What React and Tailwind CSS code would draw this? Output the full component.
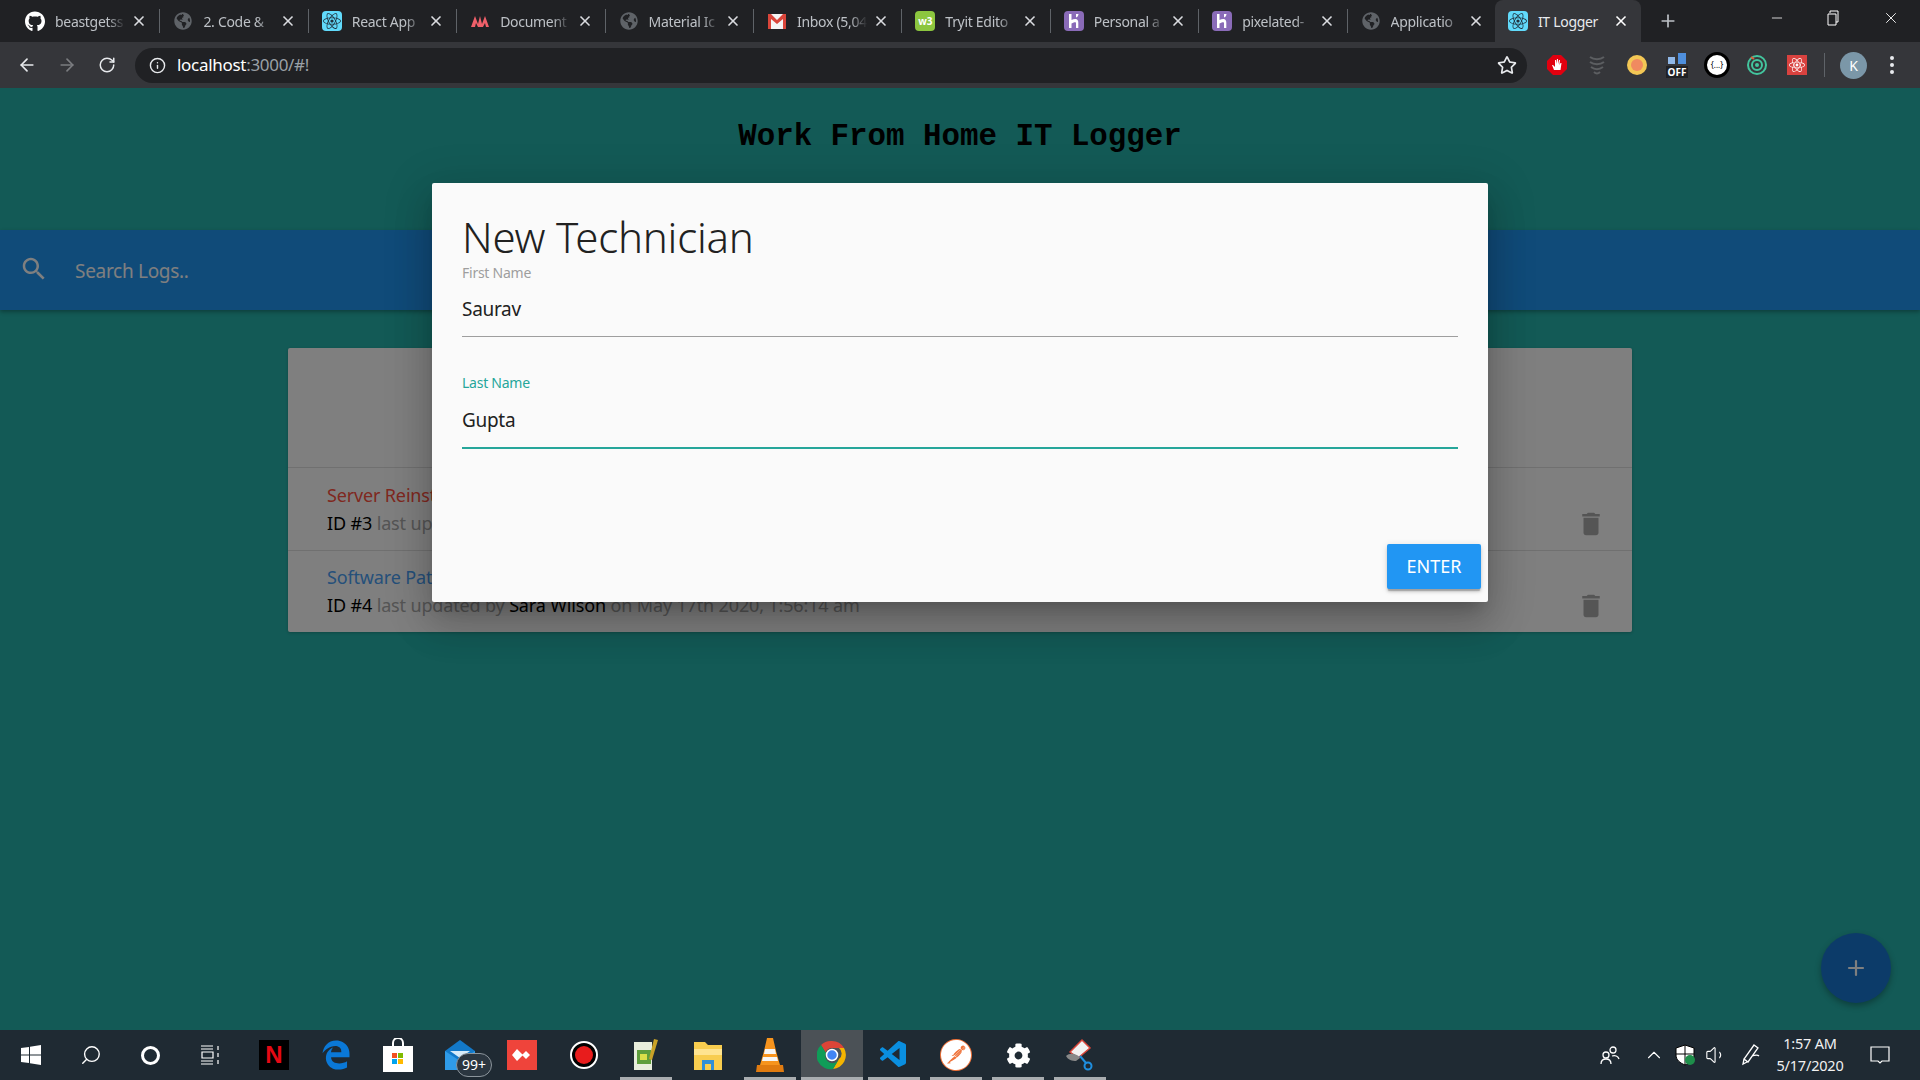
import React from "react";
import { FaGithub, FaGlobeAmericas, FaReact, FaCog, FaRegStar, FaEdgeLegacy } from "react-icons/fa";
import { SiPostman } from "react-icons/si";
import { VscVscode } from "react-icons/vsc";
import { ArrowLeft, ArrowRight, RotateCw, Info, Plus, X, Minus, ChevronUp, Search, Volume1 } from "lucide-react";

const ReactFav = () => (
  <span className="w-5 h-5 bg-[#61dafb] flex items-center justify-center rounded-sm">
    <FaReact className="text-[#20323f] text-[18px]" />
  </span>
);
const Globe = () => <FaGlobeAmericas className="text-[#5f6368] text-[18px]" />;
const HerokuFav = () => (
  <span className="w-5 h-5 bg-[#8a6bb8] flex items-center justify-center rounded-sm">
    <svg width="20" height="20" viewBox="0 0 20 20" fill="white">
      <path d="M5 3h2.500v6c2-1 5-1.500 6 0 .8 1 .8 2 .8 3v5H12v-5c0-1-1-1.500-4.500.5v4.500H5z" />
      <path d="M12 3h2.500c0 1.500-1 3-2.500 3.500z" />
    </svg>
  </span>
);
const MaterialFav = () => (
  <svg width="20" height="20" viewBox="0 0 20 20">
    <path d="M1 16L5 5l3 8 2-8 2 8 3-8 4 11h-3l-1-4-2 4H8l-2-4-1 4z" fill="#f0606a" />
  </svg>
);
const GmailFav = () => (
  <svg width="20" height="20" viewBox="0 0 20 20">
    <rect x="1" y="3" width="18" height="15" fill="#f4f4f4" />
    <path d="M1 3h3l6 6 6-6h3v15h-3V8l-6 5-6-5v10H1z" fill="#d9453a" />
  </svg>
);
const W3Fav = () => (
  <span className="w-5 h-5 bg-[#8cc63f] flex items-center justify-center rounded-sm text-[10px] font-bold text-white leading-none">w3</span>
);

// titles are what fits in the tab before chrome fades them out
const tabs = [
  { title: "beastgetss", icon: <FaGithub className="text-white text-[21px]" /> },
  { title: "2. Code &", icon: <Globe /> },
  { title: "React App", icon: <ReactFav /> },
  { title: "Document", icon: <MaterialFav /> },
  { title: "Material Ic", icon: <Globe /> },
  { title: "Inbox (5,04", icon: <GmailFav /> },
  { title: "Tryit Edito", icon: <W3Fav /> },
  { title: "Personal a", icon: <HerokuFav /> },
  { title: "pixelated-", icon: <HerokuFav /> },
  { title: "Applicatio", icon: <Globe /> },
];

const uiFont = "font-['Noto_Sans',sans-serif]";

const Tab = ({ title, icon, last }) => (
  <div className={`w-[148.4px] h-[42px] flex items-center relative pl-[13px] pr-[12px] ${last ? "" : "border-r border-[#5f6368] [border-image:linear-gradient(transparent_22%,#5f6368_22%,#5f6368_78%,transparent_78%)_1]"}`}>
    <span className="w-5 h-5 flex items-center justify-center shrink-0">{icon}</span>
    <span className="ml-[10px] w-[74px] whitespace-nowrap text-[14px] text-[#bdc1c6] tracking-[-0.3px] [mask-image:linear-gradient(to_right,black_72%,transparent_95%)]">{title}</span>
    <X className="ml-auto w-4 h-4 text-[#dadce0]" strokeWidth={2.5} />
  </div>
);

const ChromeBar = () => (
  <header className={`h-[88px] shrink-0 bg-[#202124] ${uiFont}`}>
    <div className="h-[42px] flex pl-[12px]">
      {tabs.map((t, i) => (
        <Tab key={t.title} title={t.title} icon={t.icon} last={i === tabs.length - 1} />
      ))}
      <div className="w-[146px] h-[42px] -ml-px bg-[#35363a] rounded-t-lg flex items-center pl-[13px] pr-[12px]">
        <ReactFav />
        <span className="ml-[10px] text-[14px] tracking-[-0.3px] text-[#e8eaed] whitespace-nowrap">IT Logger</span>
        <X className="ml-auto w-4 h-4 text-white" strokeWidth={2.5} />
      </div>
      <Plus className="ml-[17px] mt-[11px] w-[20px] h-[20px] text-[#bdc1c6]" />
      <div className="ml-auto flex items-start text-white">
        <Minus className="w-4 h-4 mt-[10px] mr-[40px]" strokeWidth={1.2} />
        <svg className="mt-[10px] mr-[41px]" width="16" height="16" viewBox="0 0 16 16" fill="none" stroke="white">
          <path d="M5 3V1h8v11h-2M3 4h8v11H3z" />
        </svg>
        <X className="w-[18px] h-[18px] mt-[9px] mr-[20px]" strokeWidth={1.2} />
      </div>
    </div>
    <div className="h-[46px] bg-[#35363a] flex items-center">
      <ArrowLeft className="ml-[17px] w-[20px] h-[20px] text-[#e8eaed]" />
      <ArrowRight className="ml-[20px] w-[20px] h-[20px] text-[#7b7d80]" />
      <RotateCw className="ml-[21px] w-[18px] h-[18px] text-[#e8eaed]" />
      <div className="ml-[19px] w-[1392px] h-[35px] rounded-full bg-[#202124] flex items-center pl-[14px] pr-[10px]">
        <Info className="w-[17px] h-[17px] text-[#e8eaed]" />
        <span className="ml-[11px] text-[17px] tracking-[-0.3px] text-white">
          localhost<span className="text-[#9aa0a6]">:3000/#!</span>
        </span>
        <FaRegStar className="ml-auto text-[20px] text-[#e8eaed]" />
      </div>
      <div className="flex items-center ml-[10px]">
        <span className="w-[40px] flex justify-center">
          <svg width="22" height="22" viewBox="0 0 22 22">
            <path d="M7 1h8l6 6v8l-6 6H7l-6-6V7z" fill="#e2000f" />
            <path d="M8 16l-2-5h1l2 2V6h1v4l1-5h1v5l1-4h1l-.5 5 1-2h1l-1 7z" fill="white" />
          </svg>
        </span>
        <span className="w-[40px] flex justify-center">
          <svg width="20" height="22" viewBox="0 0 20 22" fill="none" stroke="#5c5e61" strokeWidth="2">
            <path d="M3 3c4 3 10 3 14 0M3 8c4 3 10 3 14 0M4 13c4 3 8 3 12 0M7 18c2 2 4 2 6 0" />
          </svg>
        </span>
        <span className="w-[40px] flex justify-center">
          <span className="w-[20px] h-[20px] rounded-full bg-[#f3c755] flex items-center justify-center">
            <span className="w-[12px] h-[12px] rounded-full bg-[#f08a60]" />
          </span>
        </span>
        <span className="w-[40px] flex flex-col items-center relative">
          <svg width="20" height="14" viewBox="0 0 20 14">
            <rect x="1" y="5" width="7" height="7" fill="#90b8e8" />
            <rect x="11" y="1" width="8" height="11" fill="#4f8fdc" />
          </svg>
          <span className="bg-[#202124] text-white text-[10px] leading-[12px] font-bold px-[2px]">OFF</span>
        </span>
        <span className="w-[40px] flex justify-center">
          <span className="w-[20px] h-[20px] rounded-full bg-white border-[3px] border-black box-content -m-[2px] text-black text-[8px] leading-[20px] text-center">{"{...}"}</span>
        </span>
        <span className="w-[40px] flex justify-center">
          <svg width="22" height="22" viewBox="0 0 22 22" fill="none">
            <circle cx="11" cy="11" r="9" stroke="#43c59e" strokeWidth="2" />
            <circle cx="11" cy="11" r="5" stroke="#43c59e" strokeWidth="2" />
            <circle cx="11" cy="11" r="2" fill="#43c59e" />
            <path d="M5 3l3 2" stroke="#e0603a" strokeWidth="2" />
          </svg>
        </span>
        <span className="w-[40px] flex justify-center">
          <span className="w-[20px] h-[20px] bg-[#d9423f] flex items-center justify-center">
            <FaReact className="text-white text-[16px]" />
          </span>
        </span>
        <span className="w-px h-[24px] bg-[#5f6368] ml-[7px]" />
        <span className="ml-[15px] w-[27px] h-[27px] rounded-full bg-[#7b97a8] text-white text-[14px] flex items-center justify-center">K</span>
        <span className="ml-[23px] flex flex-col gap-[3px]">
          <span className="w-[4px] h-[4px] rounded-full bg-[#e8eaed]" />
          <span className="w-[4px] h-[4px] rounded-full bg-[#e8eaed]" />
          <span className="w-[4px] h-[4px] rounded-full bg-[#e8eaed]" />
        </span>
      </div>
    </div>
  </header>
);

const TrashIcon = () => (
  <svg className="w-[30px] h-[30px] text-[#aaaaaa] fill-current" viewBox="0 0 24 24">
    <path d="M6 19c0 1.1.9 2 2 2h8c1.1 0 2-.9 2-2V7H6v12zM19 4h-3.5l-1-1h-5l-1 1H5v2h14V4z" />
  </svg>
);

const logs = [
  { id: 3, title: "Server Reinstall", color: "text-[#ff5040]" },
  { id: 4, title: "Software Patch", color: "text-[#4aa0f5]" },
];

const LogRow = ({ log }) => (
  <li className="h-[82.5px] border-t border-[#e0e0e0] pl-[39px] pr-[26px] flex items-end relative">
    <div className="flex-1 pb-[13px]">
      <div className={`text-[18px] leading-[28px] tracking-[-0.15px] ${log.color}`}>{log.title}</div>
      <div className="text-[18px] leading-[28px] tracking-[-0.15px] text-[#aaaaaa] whitespace-nowrap">
        <span className="text-black">ID #{log.id}</span> last updated by <span className="text-black">Sara Wilson</span> on May 17th 2020, 1:56:14 am
      </div>
    </div>
    <span className="pb-[11px]"><TrashIcon /></span>
  </li>
);

const Field = ({ label, value, focused }) => (
  <div className="h-[110px]">
    <div className={`text-[14px] leading-[20px] tracking-[-0.25px] ${focused ? "text-[#26a69a]" : "text-[#9e9e9e]"}`}>{label}</div>
    <div className={`mt-[6px] flex items-center pb-[6px] text-[19px] tracking-[-0.3px] text-[#212121] ${focused ? "border-b-2 border-[#26a69a] h-[50px]" : "h-[48px] border-b border-[#9e9e9e]"}`}>{value}</div>
  </div>
);

const Modal = () => (
  <div className="w-[1056px] h-[419px] bg-[#fafafa] rounded-[2px] px-[30px] pt-[28px] relative shadow-[0_24px_38px_3px_rgba(0,0,0,0.14),0_9px_46px_8px_rgba(0,0,0,0.12),0_11px_15px_-7px_rgba(0,0,0,0.2)]">
    <h4 className="text-[42px] leading-[52px] tracking-[-0.2px] font-light text-[#212121]">New Technician</h4>
    <Field label="First Name" value="Saurav" />
    <Field label="Last Name" value="Gupta" focused />
    <button className="absolute right-[7px] bottom-[13px] w-[94px] h-[45px] bg-[#2196f3] rounded-[2px] text-white text-[18px] shadow-[0_3px_3px_0_rgba(0,0,0,0.14),0_1px_7px_0_rgba(0,0,0,0.12),0_3px_1px_-1px_rgba(0,0,0,0.2)]">ENTER</button>
  </div>
);

const PageContent = () => (
  <main className={`flex-1 relative bg-[#26b4ac] overflow-hidden ${uiFont}`}>
    <h1 className="pt-[29px] h-[142px] text-center font-['Liberation_Mono',monospace] font-bold text-[30.8px] leading-[40px] text-black">
      Work From Home IT Logger
    </h1>
    <div className="h-[80px] bg-[#2196f3] flex items-center pl-[19px] shadow-[0_2px_4px_rgba(0,0,0,0.3)]">
      <svg className="w-[30px] h-[30px] text-white fill-current -mt-[3px]" viewBox="0 0 24 24">
        <path d="M15.5 14h-.79l-.28-.27C15.41 12.590 16 11.110 16 9.500 16 5.910 13.090 3 9.500 3S3 5.910 3 9.500 5.910 16 9.500 16c1.610 0 3.090-.59 4.230-1.570l.27.28v.79l5 4.990L20.490 19l-4.990-5zm-6 0C7.010 14 5 11.990 5 9.500S7.010 5 9.500 5 14 7.010 14 9.500 11.990 14 9.500 14z" />
      </svg>
      <span className="ml-[26px] mt-[3px] text-[19px] tracking-[-0.3px] text-white">Search Logs..</span>
    </div>
    <section className="mx-auto mt-[38px] w-[1344px] bg-white rounded-[2px] shadow-[0_1px_3px_rgba(0,0,0,0.2)]">
      <div className="h-[119px]" />
      <ul>
        {logs.map((log) => (
          <LogRow key={log.id} log={log} />
        ))}
      </ul>
    </section>
    <button className="absolute right-[29px] bottom-[27px] w-[70px] h-[70px] rounded-full bg-[#1976d2] flex items-center justify-center shadow-[0_3px_6px_rgba(0,0,0,0.3)]">
      <Plus className="w-[24px] h-[24px] text-white" strokeWidth={2.2} />
    </button>
    {/* dimmed overlay with the add technician modal */}
    <div className="absolute inset-0 bg-black/50 flex justify-center pt-[95px]">
      <Modal />
    </div>
  </main>
);

const taskIcons = [
  { key: "netflix", node: <span className="w-[30px] h-[30px] bg-black flex items-center justify-center text-[#e50914] font-bold text-[24px] leading-none font-['Liberation_Sans',sans-serif]">N</span> },
  { key: "edge", node: <FaEdgeLegacy className="text-[#0a78d7] text-[30px]" /> },
  { key: "store", node: (
    <svg width="30" height="34" viewBox="0 0 30 34">
      <path d="M10 8V5a5 5 0 0110 0v3" fill="none" stroke="white" strokeWidth="2" />
      <rect y="8" width="30" height="26" fill="white" />
      <rect x="9" y="15" width="5" height="5" fill="#f25022" /><rect x="15" y="15" width="5" height="5" fill="#7fba00" />
      <rect x="9" y="21" width="5" height="5" fill="#00a4ef" /><rect x="15" y="21" width="5" height="5" fill="#ffb900" />
    </svg>
  ) },
  { key: "mail", node: (
    <span className="relative">
      <svg width="30" height="30" viewBox="0 0 30 30">
        <rect y="11" width="30" height="19" fill="#2f9be8" />
        <path d="M0 11L15 0l15 11-15 10z" fill="#1379c9" />
        <path d="M5 11h20l-10 7z" fill="#d7ecfa" />
      </svg>
      <span className="absolute left-[11px] top-[13px] w-[36px] h-[24px] rounded-full bg-[#2b3640] border border-[#8c959c] text-white text-[14px] leading-[22px] text-center">99+</span>
    </span>
  ) },
  { key: "anydesk", node: (
    <span className="w-[30px] h-[30px] bg-[#ef443b] flex items-center justify-center">
      <svg width="20" height="14" viewBox="0 0 20 14" fill="white"><path d="M5 1l6 6-6 6-5-6zM14 3l4 4-4 4-4-4z" /></svg>
    </span>
  ) },
  { key: "record", node: (
    <span className="w-[28px] h-[28px] rounded-full bg-black border-2 border-white flex items-center justify-center">
      <span className="w-[18px] h-[18px] rounded-full bg-[#e81c1c]" />
    </span>
  ) },
  { key: "sublime", on: true, node: (
    <svg width="28" height="34" viewBox="0 0 28 34">
      <path d="M2 4h18v28H2z" fill="#e8eedc" /><path d="M5 12h14v14H5z" fill="#5e9e3c" /><path d="M8 16h7v6H8z" fill="#d9e04a" /><path d="M22 1l4 1-6 20-3-1z" fill="#c9a227" />
    </svg>
  ) },
  { key: "folder", node: (
    <svg width="28" height="30" viewBox="0 0 28 30">
      <path d="M0 2h11l3 3h14v25H0z" fill="#f8cd4f" /><path d="M0 9h28v6H0z" fill="#ffe48f" /><path d="M8 20h12v10h-3v-6h-6v6H8z" fill="#2f8fd8" />
    </svg>
  ) },
  { key: "vlc", on: true, node: (
    <svg width="28" height="36" viewBox="0 0 28 36">
      <path d="M11 1h6l3 13 4 14H4l4-14z" fill="#f7941d" /><path d="M9 12h10l1 5H8zM7 20h14l1 4H6z" fill="#f5f5f5" /><path d="M1 28h26l1 7H0z" fill="#e07b10" />
    </svg>
  ) },
  { key: "chrome", on: true, active: true, node: (
    <svg width="30" height="30" viewBox="0 0 30 30">
      <path d="M15 1a14 14 0 0112 7H15a7 7 0 00-6.500 4.500L4 5a14 14 0 0111-4z" fill="#db4437" />
      <path d="M27 8a14 14 0 01-11 21l6-10a7 7 0 000-11z" fill="#f4b400" />
      <path d="M16 29A14 14 0 014 5l5 8a7 7 0 0013 6z" fill="#0f9d58" />
      <circle cx="15" cy="15" r="5.500" fill="#4285f4" stroke="white" strokeWidth="1.500" />
    </svg>
  ) },
  { key: "vscode", on: true, node: <VscVscode className="text-[#0a8fe0] text-[32px]" /> },
  { key: "postman", on: true, node: (
    <span className="w-[32px] h-[32px] rounded-full bg-[#ef7239] flex items-center justify-center"><SiPostman className="text-white text-[30px]" /></span>
  ) },
  { key: "settings", on: true, node: <FaCog className="text-white text-[25px]" /> },
  { key: "snip", on: true, node: (
    <svg width="28" height="34" viewBox="0 0 28 34" fill="none">
      <path d="M4 14L16 2l8 8-12 10z" fill="#f2f2f2" stroke="#d9453a" strokeWidth="1.500" />
      <path d="M0 18c4-4 12-2 14 2l-4 3c-4 0-8-1-10-5z" fill="#888" />
      <circle cx="22" cy="28" r="3.500" stroke="#1f8fe0" strokeWidth="2" /><path d="M20 25l-6-7" stroke="#1f8fe0" strokeWidth="2" />
    </svg>
  ) },
];

const Taskbar = () => (
  <footer className={`h-[50px] shrink-0 bg-[#1f2a33] flex items-stretch text-white ${uiFont}`}>
    <div className="w-[61px] flex items-center justify-center">
      <svg width="20" height="20" viewBox="0 0 20 20" fill="white">
        <path d="M0 3l8-1.100V9.500H0zM9 1.700L20 0v9.500H9zM0 10.500h8v7.600L0 17zM9 10.500h11V20L9 18.300z" />
      </svg>
    </div>
    <div className="w-[60px] flex items-center justify-center"><Search className="w-[22px] h-[22px] -scale-x-100" strokeWidth={1.5} /></div>
    <div className="w-[59px] flex items-center justify-center"><span className="w-[19px] h-[19px] rounded-full border-[3px] border-white" /></div>
    <div className="w-[60px] flex items-center justify-center">
      <svg width="20" height="20" viewBox="0 0 20 20" fill="none" stroke="white" strokeWidth="1.200">
        <path d="M1 1h12M1 4h12M2 7h11v6H2zM1 16h12M1 19h12M18 1v4M18 8v4M18 15v4" />
      </svg>
    </div>
    <div className="flex ml-[3px]">
      {taskIcons.map((t) => (
        <div key={t.key} className={`w-[62px] relative flex items-center justify-center ${t.active ? "bg-[#4b5156]" : ""}`}>
          {t.node}
          {t.on && <span className={`absolute bottom-0 h-[3px] bg-[#a9adb0] ${t.active ? "left-0 right-0" : "left-[5px] right-[5px]"}`} />}
        </div>
      ))}
    </div>
    <div className="ml-auto flex items-center">
      <svg className="mr-[23px]" width="20" height="20" viewBox="0 0 20 20" fill="none" stroke="white" strokeWidth="1.300">
        <circle cx="13" cy="5" r="3" /><circle cx="6" cy="10" r="3" /><path d="M1 19c0-3 2-5 5-5s5 2 5 5M12 11c3-1 6 0 7 3" />
      </svg>
      <ChevronUp className="mr-[10px] w-[22px] h-[22px]" strokeWidth={1.2} />
      <svg className="mr-[10px]" width="20" height="22" viewBox="0 0 20 22">
        <path d="M10 1l9 3v7c0 5-4 8-9 10-5-2-9-5-9-10V4z" fill="white" stroke="black" />
        <path d="M10 1v20M1 10h18" stroke="black" />
        <circle cx="15" cy="16" r="5" fill="#1e8e4a" />
      </svg>
      <Volume1 className="mr-[13px] w-[22px] h-[22px]" strokeWidth={1.2} />
      <svg className="mr-[5px]" width="20" height="22" viewBox="0 0 20 22" fill="none" stroke="white" strokeWidth="1.300">
        <path d="M14 1l4 3L8 18l-4-3zM4 15l-1 5 4-2M12 12c3-1 6-1 7 0" />
      </svg>
      <div className="w-[90px] -mt-[2px] text-center text-[14.5px] leading-[22px] tracking-[-0.2px] text-[#f1f1f1]">
        <div>1:57 AM</div>
        <div>5/17/2020</div>
      </div>
      <svg className="ml-[15px] mr-[30px]" width="20" height="20" viewBox="0 0 20 20" fill="none" stroke="white" strokeWidth="1.200">
        <path d="M1 2h18v14h-7l-2 2-2-2H1z" />
      </svg>
    </div>
  </footer>
);

const App = () => {
  return (
    <div className="w-[1920px] h-[1080px] flex flex-col overflow-hidden">
      <ChromeBar />
      <PageContent />
      <Taskbar />
    </div>
  );
};

export default App;
